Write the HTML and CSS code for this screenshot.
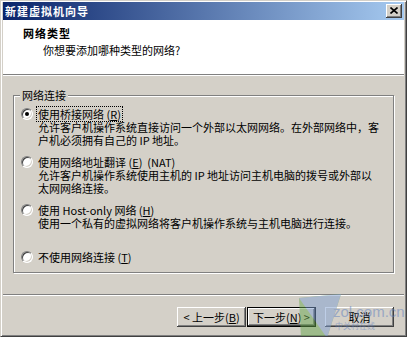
FILE: index.html
```html
<!doctype html>
<html lang="zh-CN">
<head>
    <meta charset="utf-8">
    <title>新建虚拟机向导</title>
    <link rel="stylesheet" href="styles.css">
</head>
<body>
    <div class="window">
        <div class="titlebar">
            <span class="title">新建虚拟机向导</span>
            <span class="close">
                <svg width="8" height="7" viewBox="0 0 8 7"><path d="M0.5 0.5L7.5 6.5M7.5 0.5L0.5 6.5" stroke="#000" stroke-width="1.6" fill="none"/></svg>
            </span>
        </div>
        <div class="header">
            <div class="h-title">网络类型</div>
            <div class="h-sub">你想要添加哪种类型的网络?</div>
        </div>
        <div class="content">
            <fieldset class="group">
                <legend>网络连接</legend>
                <div class="opt opt-first">
                    <div class="opt-label"><span class="radio checked"></span><span class="focus">使用桥接网络 (<u>R</u>)</span></div>
                    <div class="opt-desc">允许客户机操作系统直接访问一个外部以太网网络。在外部网络中，客<br>户机必须拥有自己的 IP 地址。</div>
                </div>
                <div class="opt">
                    <div class="opt-label"><span class="radio"></span><span>使用网络地址翻译 (<u>E</u>) &nbsp;(NAT)</span></div>
                    <div class="opt-desc">允许客户机操作系统使用主机的 IP 地址访问主机电脑的拨号或外部以<br>太网网络连接。</div>
                </div>
                <div class="opt">
                    <div class="opt-label"><span class="radio"></span><span>使用 Host-only 网络 (<u>H</u>)</span></div>
                    <div class="opt-desc">使用一个私有的虚拟网络将客户机操作系统与主机电脑进行连接。</div>
                </div>
                <div class="opt opt-last">
                    <div class="opt-label"><span class="radio"></span><span>不使用网络连接 (<u>T</u>)</span></div>
                </div>
            </fieldset>
        </div>
        <div class="sep"></div>
        <div class="buttons">
            <button class="btn">&lt; 上一步(<u>B</u>)</button>
            <button class="btn default">下一步(<u>N</u>) &gt;</button>
            <button class="btn cancel">取消</button>
        </div>
        <div class="watermark">
            <svg class="wm-logo" width="48" height="46" viewBox="0 0 48 46">
                <polygon points="0,6 42,2 28,46 2,46" fill="#6aa84f"/>
                <polygon points="0,6 42,2 28,46" fill="#7f9fd0"/>
            </svg>
            <span class="wm-text">zol.com.cn</span>
            <span class="wm-sub">中关村在线</span>
        </div>
    </div>
</body>
</html>
```

FILE: styles.css
```css
* { margin:0; padding:0; }

body
{
    font-family: "Noto Sans CJK SC", sans-serif;
    font-size: 11px;
    color: #000;
    background: #d4d0c8;
}

.window
{
    position: relative;
    width: 407px;
    height: 337px;
    box-sizing: border-box;
    background: #d4d0c8;
    border: 1px solid;
    border-color: #d4d0c8 #404040 #404040 #d4d0c8;
    box-shadow: inset 1px 1px #fff, inset -1px -1px #808080;
    padding: 1px 2px 2px 2px;
    display: flex;
    flex-direction: column;
    overflow: hidden;
}

.titlebar
{
    height: 18px;
    flex: none;
    display: flex;
    align-items: center;
    padding: 0 2px 0 2px;
    background: linear-gradient(to right, #0a246a, #a6caf0);
}

.title
{
    color: #fff;
    font-weight: bold;
    letter-spacing: 1px;
    line-height: 14px;
}

.close
{
    margin-left: auto;
    width: 16px;
    height: 14px;
    box-sizing: border-box;
    background: #d4d0c8;
    box-shadow: inset -1px -1px #404040, inset 1px 1px #fff, inset -2px -2px #808080;
    display: flex;
    align-items: center;
    justify-content: center;
    padding-bottom: 1px;
}

.header
{
    height: 55px;
    flex: none;
    box-sizing: border-box;
    background: #fff;
    border-bottom: 1px solid #808080;
    box-shadow: 0 1px #fff;
    padding: 6px 0 0 20px;
}

.h-title
{
    font-weight: bold;
    letter-spacing: 1px;
    line-height: 14px;
}

.h-sub
{
    margin-top: 3px;
    padding-left: 20px;
    line-height: 14px;
}

.content
{
    padding: 0 10px;
}

.group
{
    margin-top: 13px;
    padding: 0 0 8px 6px;
    border: 1px solid #808080;
    box-shadow: 1px 1px 0 #fff, inset 1px 1px 0 #fff;
    min-width: 0;
}

.group legend
{
    padding: 0 2px;
    line-height: 14px;
    background: #d4d0c8;
}

.opt
{
    margin-top: 8px;
}

.opt-first
{
    margin-top: 5px;
}

.opt-last
{
    margin-top: 20px;
}

.opt-label
{
    display: flex;
    align-items: center;
    height: 14px;
    line-height: 14px;
    white-space: nowrap;
}

.focus
{
    outline: 1px dotted #000;
    outline-offset: 0;
    padding: 0 1px;
    margin-left: -1px;
}

.radio
{
    width: 12px;
    height: 12px;
    box-sizing: border-box;
    border-radius: 50%;
    background: #fff;
    border: 1px solid;
    border-color: #808080 #fff #fff #808080;
    box-shadow: inset 1px 1px #404040, inset -1px -1px #d4d0c8;
    margin: 0 5px 0 1px;
    position: relative;
    flex: none;
}

.radio.checked::after
{
    content: "";
    position: absolute;
    left: 3px;
    top: 3px;
    width: 4px;
    height: 4px;
    border-radius: 50%;
    background: #000;
}

.opt-desc
{
    padding-left: 18px;
    line-height: 13px;
    white-space: nowrap;
}

.sep
{
    flex: none;
    margin-top: 21px;
    height: 1px;
    background: #808080;
    border-bottom: 1px solid #fff;
}

.buttons
{
    display: flex;
    justify-content: flex-end;
    gap: 1px;
    margin-top: 11px;
    padding-right: 10px;
}

.btn
{
    width: 69px;
    height: 20px;
    box-sizing: border-box;
    border: none;
    background: #d4d0c8;
    font-family: inherit;
    font-size: 11px;
    color: #000;
    line-height: 14px;
    box-shadow: inset -1px -1px #404040, inset 1px 1px #fff, inset -2px -2px #808080;
}

.btn.default
{
    border: 1px solid #000;
}

.btn.cancel
{
    margin-left: 8px;
}

.watermark
{
    position: absolute;
    left: 298px;
    top: 291px;
    width: 106px;
    height: 46px;
    opacity: 0.5;
    pointer-events: none;
}

.wm-logo
{
    position: absolute;
    left: 0;
    top: 0;
}

.wm-text
{
    position: absolute;
    left: 34px;
    top: 12px;
    font-family: "Liberation Sans", sans-serif;
    font-size: 15px;
    line-height: 16px;
    color: #5f80c0;
}

.wm-sub
{
    position: absolute;
    left: 36px;
    top: 29px;
    font-size: 8px;
    line-height: 10px;
    color: #5f80c0;
}
```
